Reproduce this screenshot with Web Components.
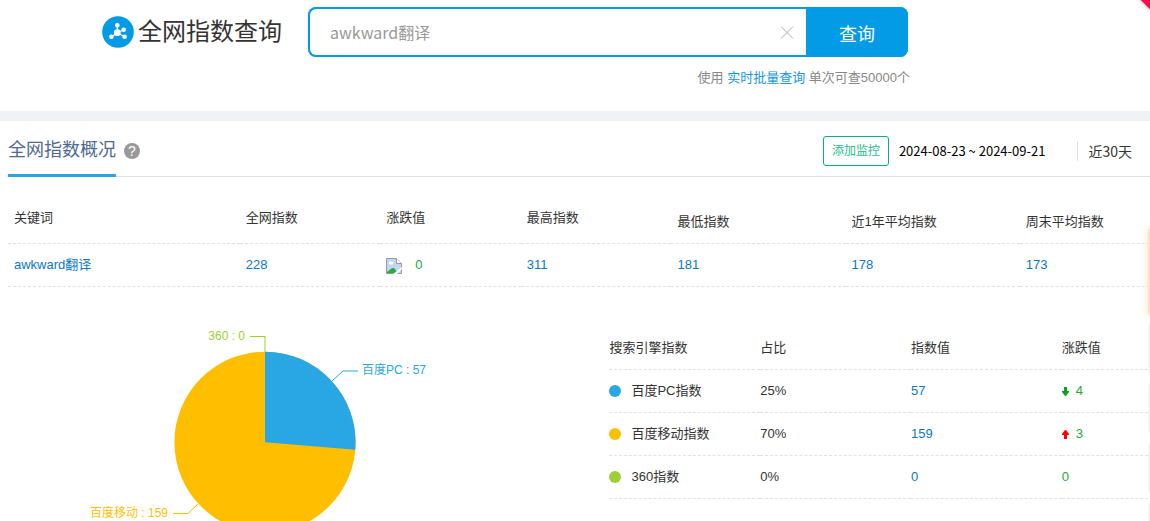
<!DOCTYPE html>
<html lang="zh-CN">
<head>
<meta charset="utf-8">
<title>全网指数查询</title>
<style>
body { margin: 0; background: #fff; color: #333; font: 13px/20px "Liberation Sans", "Noto Sans CJK SC", sans-serif; overflow: hidden; }
</style>
</head>
<body>
<index-page></index-page>
<script>
const define = (name, html, setup) => {
  const template = document.createElement('template');
  template.innerHTML = html;
  customElements.define(name, class extends HTMLElement {
    connectedCallback() {
      if (this.shadowRoot) return;
      this.attachShadow({ mode: 'open' }).append(template.content.cloneNode(true));
      if (setup) setup(this, this.shadowRoot);
    }
  });
};

define('site-logo', `
<style>
:host { display: flex; align-items: center; gap: 4px; height: 50px; }
svg { display: block; }
h1 { margin: 0; padding-bottom: 4px; font: 400 24px/32px "Noto Sans CJK SC", sans-serif; color: #333; white-space: nowrap; }
</style>
<svg width="32" height="32" viewBox="0 0 32 32" aria-hidden="true">
  <circle cx="16" cy="16" r="15.800" fill="#039be5"/>
  <g stroke="#fff" stroke-width="1.2"><path d="M15.300 16.500V9.500M15.300 16.500L21.500 14M15.300 16.500L22.500 20.800M15.300 16.500L9.500 21"/></g>
  <g fill="#fff"><circle cx="15.300" cy="16.700" r="3.400"/><circle cx="15.300" cy="9.300" r="2.300"/><circle cx="21.700" cy="13.700" r="2.300"/><circle cx="22.600" cy="20.800" r="2.300"/><circle cx="9.400" cy="20.800" r="2.300"/></g>
</svg>
<h1><slot></slot></h1>`);

define('search-box', `
<style>
:host { display: block; }
form { display: flex; height: 50px; border-radius: 8px; background: #039be5; overflow: hidden; }
.field { flex: 1; min-width: 0; display: flex; box-sizing: border-box; border: 2px solid #039be5; border-right: 0; border-radius: 8px 0 0 8px; background: #fff; }
input { flex: 1; min-width: 0; border: 0; outline: 0; padding: 0 20px; background: none; color: #999; font: 16px/24px "Noto Sans CJK SC", sans-serif; }
.clear { border: 0; background: none; padding: 0 12px; display: flex; align-items: center; }
.go { width: 102px; border: 0; padding: 2px 0 0; background: #039be5; color: #fff; font: 18px/24px "Noto Sans CJK SC", sans-serif; }
</style>
<form>
  <div class="field"><input type="text" aria-label="关键词" value="awkward翻译">
  <button class="clear" type="button" aria-label="清除"><svg width="14" height="14" viewBox="0 0 14 14" fill="none" stroke="#aaa"><path d="M1 1.500l12 12M13 1.500L1 13.500"/></svg></button></div>
  <button class="go" type="button">查询</button>
</form>`);

define('help-tip', `
<style>
:host { display: block; }
button { display: block; width: 16px; height: 16px; padding: 0; border: 0; border-radius: 8px; background: #999; color: #fff; font: 14px/16px "Liberation Sans", sans-serif; }
</style>
<button type="button" aria-label="说明">?</button>`);

define('change-value', `
<style>
:host { display: flex; align-items: center; color: #21ab38; }
svg { display: block; margin-right: 7px; }
.broken { margin: 2px 13px 0 0; }
</style>
<span class="mark"></span><slot></slot>`, (host, root) => {
  const icons = {
    down: '<svg width="7" height="9" viewBox="0 0 7 9"><path d="M2 0h3v4h2v1L4 9H3L0 5V4h2z" fill="#12a022"/></svg>',
    up: '<svg width="7" height="9" viewBox="0 0 7 9"><path d="M2 9h3V5h2V4L4 0H3L0 4v1h2z" fill="#f00"/></svg>',
    broken: '<svg class="broken" width="16" height="16" viewBox="0 0 16 16"><path d="M.5.500h10l5 5v10H.5z" fill="#c2d6f5"/><path d="M1 15v-1l5-4h2l4 5z" fill="#2aad3f"/><ellipse cx="5" cy="5" rx="2.500" ry="1.500" fill="#fff"/><path d="M.5 15.500V.500h10l5 5v10z" fill="none" stroke="#999"/><path d="M10.500.500v5h5" fill="#fff" stroke="#999"/><path d="M7 16l9-7v2l-5 5z" fill="#fff"/></svg>'
  };
  root.querySelector('.mark').innerHTML = icons[host.getAttribute('trend')] || '';
});

define('overview-bar', `
<style>
:host { display: flex; height: 56px; margin-left: 8px; box-sizing: border-box; border-bottom: 1px solid #e2e2e2; padding-right: 18px; font-family: "Noto Sans CJK SC", sans-serif; }
h2 { margin: 0 8px 0 0; height: 56px; box-sizing: border-box; border-bottom: 3px solid #29a7e4; font: 400 18px/54px "Noto Sans CJK SC", sans-serif; color: #4f6894; white-space: nowrap; }
help-tip { margin-top: 22px; }
.tools { margin-left: auto; display: flex; align-items: center; height: 60px; white-space: nowrap; }
.add { height: 30px; padding: 0 8px 2px; border: 1px solid #07b07c; border-radius: 3px; background: #fff; color: #1fbd8b; font: 12px/24px "Noto Sans CJK SC", sans-serif; }
.range { margin: 0 32px 0 10px; color: #000; font-size: 13px; }
.days { border: 0; border-left: 1px solid #e2e2e2; background: none; padding: 0 0 0 10px; color: #333; font: 14px/20px "Noto Sans CJK SC", sans-serif; }
</style>
<h2><slot></slot></h2><help-tip></help-tip>
<div class="tools"><button class="add" type="button">添加监控</button>
<span class="range"><time>2024-08-23</time> ~ <time>2024-09-21</time></span>
<button class="days" type="button">近30天</button></div>`);

define('keyword-table', `
<style>
:host { display: block; margin: 14px 0 0 8px; }
table { width: 100%; border-collapse: collapse; table-layout: fixed; }
thead, tbody { border-bottom: 1px dashed #e2e2e2; }
th, td { padding: 0 6px; text-align: left; font-weight: 400; white-space: nowrap; }
th { padding-top: 2px; height: 50px; }
th.low { padding-top: 10px; height: 42px; }
td { height: 42px; }
a { color: #0b77c9; text-decoration: none; }
</style>
<table>
<colgroup><col style="width:20.300%"><col style="width:12.300%"><col style="width:12.300%"><col style="width:13.200%"><col style="width:15.250%"><col style="width:15.250%"><col></colgroup>
<thead><tr><th>关键词</th><th>全网指数</th><th>涨跌值</th><th>最高指数</th><th class="low">最低指数</th><th class="low">近1年平均指数</th><th class="low">周末平均指数</th></tr></thead>
<tbody><tr><td><a href="#">awkward翻译</a></td><td><a href="#">228</a></td><td><change-value trend="broken">0</change-value></td><td><a href="#">311</a></td><td><a href="#">181</a></td><td><a href="#">178</a></td><td><a href="#">173</a></td></tr></tbody>
</table>`);

define('share-chart', `
<style>
:host { display: block; }
svg { display: block; overflow: visible; }
text { font: 12px "Liberation Sans", "Noto Sans CJK SC", sans-serif; }
</style>
<svg width="440" height="234" viewBox="0 0 440 234" role="img" aria-label="搜索引擎指数占比">
  <circle cx="265" cy="155.300" r="90.600" fill="#ffbf00"/>
  <path d="M265 155.300V64.700A90.600 90.600 0 0 1 355.300 162.800Z" fill="#29a7e4"/>
  <g fill="none">
    <path d="M265 65V49.500H250" stroke="#9bd036"/>
    <path d="M332 94L343 84H358" stroke="#29a7e4"/>
    <path d="M198 217L188 226.500H173" stroke="#ffbf00"/>
  </g>
  <text x="245" y="53" text-anchor="end" fill="#9bd036">360 : 0</text>
  <text x="362" y="87" fill="#29a7e4">百度PC : 57</text>
  <text x="168" y="230" text-anchor="end" fill="#ffbf00">百度移动 : 159</text>
</svg>`);

define('color-dot', `
<style>
:host { display: inline-block; width: 12px; height: 12px; margin-right: 10px; border-radius: 6px; vertical-align: -2px; background: var(--dot); }
</style>`);

define('engine-table', `
<style>
:host { display: block; }
table { width: 100%; border-collapse: collapse; table-layout: fixed; }
th, td { padding: 0; height: 42px; border-bottom: 1px dashed #e2e2e2; text-align: left; font-weight: 400; white-space: nowrap; }
col { width: 28%; }
col:last-child { width: 16%; }
a { color: #0b77c9; text-decoration: none; }
</style>
<table>
<colgroup><col><col><col><col></colgroup>
<thead><tr><th>搜索引擎指数</th><th>占比</th><th>指数值</th><th>涨跌值</th></tr></thead>
<tbody>
<tr><td><color-dot style="--dot:#29a7e4"></color-dot>百度PC指数</td><td>25%</td><td><a href="#">57</a></td><td><change-value trend="down">4</change-value></td></tr>
<tr><td><color-dot style="--dot:#ffbf00"></color-dot>百度移动指数</td><td>70%</td><td><a href="#">159</a></td><td><change-value trend="up">3</change-value></td></tr>
<tr><td><color-dot style="--dot:#9bd036"></color-dot>360指数</td><td>0%</td><td><a href="#">0</a></td><td><change-value>0</change-value></td></tr>
</tbody></table>`);

define('edge-decor', `
<style>
:host { position: absolute; inset: 0; overflow: hidden; pointer-events: none; }
.ribbon { position: absolute; top: -30px; right: -29px; width: 40px; height: 40px; background: #ff0a50; transform: rotate(45deg); box-shadow: 0 0 4px #0005; }
.glow { position: absolute; top: 228px; right: -18px; width: 20px; height: 88px; border-radius: 4px; background: #fde3c4; box-shadow: 0 0 10px #fde3c4; }
.cards { position: absolute; top: 322px; right: -20px; width: 20px; display: grid; gap: 8px; }
.cards i { height: 52px; border-radius: 4px; box-shadow: 0 0 3px #0003; }
</style>
<div class="glow"></div><div class="cards"><i></i><i></i><i></i><i></i></div><div class="ribbon"></div>`);

define('index-page', `
<style>
:host { display: block; position: relative; min-height: 100vh; color: #333; }
header { display: grid; grid-template: 50px auto / 180px minmax(0, 600px); column-gap: 26px; align-content: start; padding: 7px 0 0 102px; height: 104px; border-bottom: 10px solid #eff3f6; }
.note { margin: 11px -2px 0 0; text-align: right; color: #888; grid-column: 2; }
.note a { color: #1296e5; text-decoration: none; }
.split { display: grid; grid-template-columns: minmax(440px, 53%) minmax(0, 1fr); column-gap: 1px; padding-right: 2px; }
engine-table { margin-top: 40px; }
</style>
<header>
  <site-logo>全网指数查询</site-logo>
  <search-box></search-box>
  <p class="note">使用 <a href="#">实时批量查询</a> 单次可查50000个</p>
</header>
<main>
  <overview-bar>全网指数概况</overview-bar>
  <keyword-table></keyword-table>
  <div class="split"><share-chart></share-chart><engine-table></engine-table></div>
</main>
<edge-decor></edge-decor>`);
</script>
</body>
</html>
